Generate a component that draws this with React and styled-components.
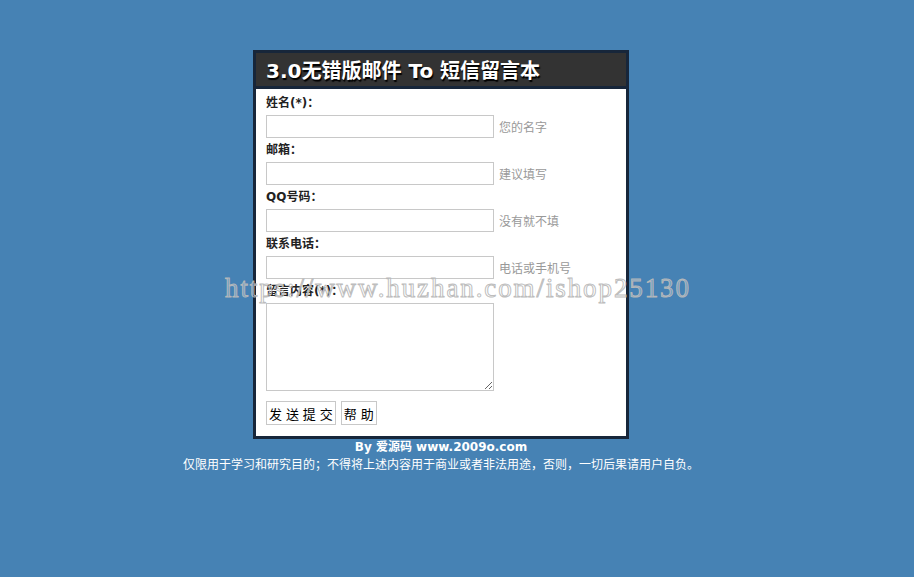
import styled, { createGlobalStyle } from "styled-components";

const GlobalStyle = createGlobalStyle`
  html, body {
    margin: 0;
    padding: 0;
    background-color: #4682b4;
  }
  body {
    font-family: "DejaVu Sans", "Noto Sans CJK SC", sans-serif;
    font-size: 12px;
  }
`;

const Page = styled.div`
  position: relative;
  width: calc(100% - 32px);
  min-height: 577px;
  padding-top: 50px;
  box-sizing: border-box;

  display: flex;
  flex-direction: column;
  align-items: center;
`;

const Box = styled.div`
  width: 376px;
  box-sizing: border-box;
  border: solid 3px #17263a;
  background-color: white;
`;

const Header = styled.div`
  height: 36px;
  box-sizing: border-box;
  padding: 4px 0 0 10px;
  background-color: #333333;
  border-bottom: solid 3px #17263a;
`;

const Title = styled.h1`
  margin: 0;
  line-height: 29px;
  font-size: 20px;
  font-weight: bold;
  color: white;
  font-family: "DejaVu Sans", "Noto Sans CJK SC", sans-serif;
  text-shadow: 1px 2px 1px #000;
  white-space: nowrap;
`;

const Form = styled.div`
  display: flex;
  flex-direction: column;
  padding: 2px 10px 11px 10px;
`;

const Label = styled.div`
  padding-top: 3px;
  margin-bottom: 2px;
  line-height: 19px;
  font-size: 12px;
  font-weight: bold;
  color: #222;
`;

const Row = styled.div`
  display: flex;
  align-items: center;
  gap: 5px;
`;

const Input = styled.input`
  width: 228px;
  height: 23px;
  box-sizing: border-box;
  margin: 0;
  border: solid 1px #c8c8c8;
  background: white;
`;

const TextArea = styled.textarea`
  width: 228px;
  height: 88px;
  box-sizing: border-box;
  margin: 0;
  border: solid 1px #c8c8c8;
  display: block;
`;

const Hint = styled.span`
  font-family: "Noto Sans CJK SC", sans-serif;
  font-size: 12px;
  color: #999;
`;

const Buttons = styled.div`
  display: flex;
  gap: 5px;
  margin-top: 10px;
`;

const Button = styled.button`
  height: 24px;
  box-sizing: border-box;
  padding: 0 2px;
  margin: 0;
  border: solid 1px #c8c8c8;
  background: white;
  color: #000;
  font-family: "Noto Sans CJK SC", sans-serif;
  font-size: 13px;
  word-spacing: 1px;
  white-space: pre;
`;

const Credit = styled.div`
  line-height: 16px;
  font-size: 12px;
  font-weight: bold;
  color: white;
`;

const Notice = styled.div`
  line-height: 18px;
  font-family: "Noto Sans CJK SC", sans-serif;
  font-size: 12px;
  color: white;
  white-space: nowrap;
`;

const Watermark = styled.div`
  position: absolute;
  left: 225px;
  top: 273px;
  font-family: "Liberation Serif", serif;
  font-size: 27px;
  letter-spacing: 1.9px;
  color: rgba(255, 255, 255, 0.25);
  -webkit-text-stroke: 1px rgba(185, 185, 185, 0.95);
  white-space: nowrap;
  pointer-events: none;
`;

const fields = [
  { label: "姓名(*)：", hint: "您的名字" },
  { label: "邮箱：", hint: "建议填写" },
  { label: "QQ号码：", hint: "没有就不填" },
  { label: "联系电话：", hint: "电话或手机号" },
];

export default function App() {
  return (
    <Page>
      <GlobalStyle />
      <Box>
        <Header>
          <Title>3.0无错版邮件 To 短信留言本</Title>
        </Header>
        <Form>
          {fields.map((f) => (
            <div key={f.label}>
              <Label>{f.label}</Label>
              <Row>
                <Input type="text" />
                <Hint>{f.hint}</Hint>
              </Row>
            </div>
          ))}
          <Label>留言内容(*)：</Label>
          <TextArea />
          <Buttons>
            <Button>发 送 提 交</Button>
            <Button>帮 助</Button>
          </Buttons>
        </Form>
      </Box>
      <Credit>By 爱源码 www.2009o.com</Credit>
      <Notice>
        仅限用于学习和研究目的；不得将上述内容用于商业或者非法用途，否则，一切后果请用户自负。
      </Notice>
      <Watermark>https://www.huzhan.com/ishop25130</Watermark>
    </Page>
  );
}
